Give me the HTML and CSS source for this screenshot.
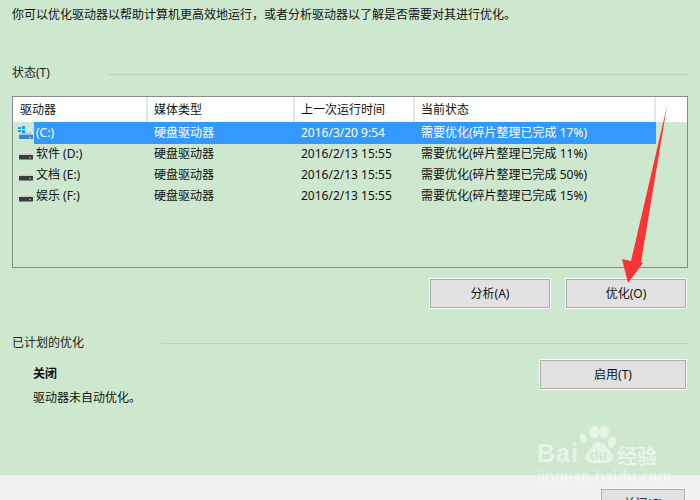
FILE: index.html
```html
<!DOCTYPE html>
<html lang="zh-CN">
<head>
<meta charset="utf-8">
<title>优化驱动器</title>
<link rel="stylesheet" href="styles.css">
</head>
<body>
<svg width="0" height="0" class="defs">
  <defs>
    <g id="drive">
      <path d="M2 10 L4 7 H14 L16 10 Z" fill="#cfcfcf"/>
      <rect x="2" y="7" width="14" height="1" fill="#e6e6e6"/>
      <rect x="2" y="10" width="14" height="4" fill="#3c3c3c"/>
      <rect x="2" y="14" width="14" height="1" fill="#8a8a8a"/>
      <rect x="12" y="12" width="2" height="1" fill="#5fdc5f"/>
    </g>
  </defs>
</svg>
<div class="window">
  <main class="content">
    <p class="intro">你可以优化驱动器以帮助计算机更高效地运行，或者分析驱动器以了解是否需要对其进行优化。</p>
    <div class="heading heading-status"><span>状态(T)</span><i class="rule rule-status"></i></div>
    <section class="list">
      <div class="list-head">
        <span class="h h1">驱动器</span>
        <span class="h h2">媒体类型</span>
        <span class="h h3">上一次运行时间</span>
        <span class="h h4">当前状态</span>
        <span class="h h5"></span>
      </div>
      <div class="row selected">
        <span class="ic">
          <svg width="16" height="16" viewBox="0 0 16 16">
            <rect x="4" y="8" width="10" height="1" fill="#bcdcf0"/>
            <path d="M2 11 L4 9 H14 L16 11 Z" fill="#9ccbe8"/>
            <rect x="2" y="11" width="14" height="4" fill="#3f86bb"/>
            <rect x="12" y="13" width="2" height="1" fill="#bff0d0"/>
            <rect x="1" y="3" width="3" height="2" fill="#1f9cf0"/>
            <rect x="5" y="2" width="3" height="3" fill="#1f9cf0"/>
            <rect x="1" y="6" width="3" height="2" fill="#1f9cf0"/>
            <rect x="5" y="6" width="3" height="3" fill="#1f9cf0"/>
          </svg>
        </span>
        <span class="c name">(C:)</span><span class="c type">硬盘驱动器</span><span class="c time">2016/3/20 9:54</span><span class="c state">需要优化(碎片整理已完成 17%)</span>
      </div>
      <div class="row">
        <span class="ic"><svg width="16" height="16" viewBox="0 0 16 16"><use href="#drive"/></svg></span>
        <span class="c name">软件 (D:)</span><span class="c type">硬盘驱动器</span><span class="c time">2016/2/13 15:55</span><span class="c state">需要优化(碎片整理已完成 11%)</span>
      </div>
      <div class="row">
        <span class="ic"><svg width="16" height="16" viewBox="0 0 16 16"><use href="#drive"/></svg></span>
        <span class="c name">文档 (E:)</span><span class="c type">硬盘驱动器</span><span class="c time">2016/2/13 15:55</span><span class="c state">需要优化(碎片整理已完成 50%)</span>
      </div>
      <div class="row">
        <span class="ic"><svg width="16" height="16" viewBox="0 0 16 16"><use href="#drive"/></svg></span>
        <span class="c name">娱乐 (F:)</span><span class="c type">硬盘驱动器</span><span class="c time">2016/2/13 15:55</span><span class="c state">需要优化(碎片整理已完成 15%)</span>
      </div>
    </section>
    <div class="actions">
      <button class="btn btn-wide">分析(A)</button>
      <button class="btn btn-wide">优化(O)</button>
    </div>
    <div class="heading heading-plan"><span>已计划的优化</span><i class="rule rule-plan"></i></div>
    <div class="plan">
      <div class="plan-text">
        <strong class="plan-title">关闭</strong>
        <p class="plan-desc">驱动器未自动优化。</p>
      </div>
      <button class="btn btn-enable">启用(T)</button>
    </div>
  </main>
  <footer class="footer">
    <button class="btn btn-close">关闭(C)</button>
  </footer>
</div>

<svg class="arrow" width="700" height="500" viewBox="0 0 700 500">
  <polygon points="667,106 641,262 643,263 628,283 622,259 631,261" fill="#fb3337"/>
</svg>

<div class="mark">
  <svg class="paw" width="40" height="42" viewBox="0 0 40 42">
    <g fill="#fff" fill-opacity=".5">
      <ellipse cx="3" cy="14" rx="3.5" ry="5.5" transform="rotate(-15 3 14)"/>
      <ellipse cx="14" cy="8" rx="5" ry="6.5"/>
      <ellipse cx="24" cy="8" rx="5" ry="6.5"/>
      <ellipse cx="32" cy="18" rx="4" ry="6" transform="rotate(15 32 18)"/>
      <path d="M19 18 C25 18 27 24 31 28 C36 33 32 39 26 39 H12 C6 39 3 33 8 28 C12 24 13 18 19 18 Z"/>
    </g>
  </svg>
  <span class="mark-bai">Bai</span>
  <span class="mark-du">du</span>
  <span class="mark-jy">经验</span>
  <span class="mark-url">jingyan.baidu.com</span>
</div>
</body>
</html>
```
FILE: styles.css
```css
* { box-sizing: border-box; }
html, body { margin: 0; height: 100%; }
body {
  width: 700px;
  height: 500px;
  overflow: hidden;
  position: relative;
  font-family: "Noto Sans", "Noto Sans CJK SC", sans-serif;
  font-size: 12px;
  line-height: 16px;
  color: #111;
  background: #f0f0f0;
}
.defs { position: absolute; }
.window { display: flex; flex-direction: column; height: 500px; }
.content {
  height: 475px;
  flex: none;
  padding: 7px 11px 0 12px;
  background: #cde8cf;
}
.intro { margin: 0; }
.heading { display: flex; align-items: center; color: #222; }
.heading-status { margin-top: 42px; }
.heading-plan { margin-top: 27px; }
.rule { display: block; flex: 1; height: 1px; background: #bfd0c0; }
.rule-status { margin: 3px 0 0 58px; }
.rule-plan { margin: 1px 0 0 77px; }
.list {
  margin-top: 15px;
  width: 676px;
  height: 172px;
  border: 1px solid #858b87;
}
.list-head {
  display: grid;
  grid-template-columns: 135px 147px 120px 241px 31px;
  height: 25px;
  background: #fff;
}
.h {
  padding-left: 6px;
  line-height: 26px;
  border-right: 2px solid #e6e6e6;
}
.h1 { padding-left: 7px; }
.h5 { border-right: 0; }
.row {
  display: grid;
  grid-template-columns: 21px 113px 147px 120px 242px;
  width: 643px;
  height: 21px;
  line-height: 22px;
}
.ic { padding: 2px 0 0 4px; display: block; }
.ic svg { display: block; }
.name { padding-left: 2px; }
.type, .time, .state { padding-left: 7px; white-space: nowrap; }
.selected .c { background: #3399ff; color: #fff; }
.actions {
  display: flex;
  justify-content: flex-end;
  gap: 14px;
  margin-top: 11px;
  width: 675px;
}
.btn {
  display: block;
  height: 29px;
  padding: 0;
  font: inherit;
  color: #111;
  background: #e1e1e1;
  border: 1px solid #adadad;
  outline: 1px solid #f6f9f6;
  outline-offset: 0;
}
.btn-wide { width: 120px; margin: 0 1px; }
.plan {
  display: flex;
  justify-content: space-between;
  width: 674px;
  margin-top: 9px;
}
.plan-text { padding: 6px 0 0 21px; }
.plan-title { display: block; font-weight: 700; }
.plan-desc { margin: 8px 0 0; }
.btn-enable { width: 146px; }
.footer {
  flex: 1;
  border-top: 1px solid #e8e8e8;
  padding: 13px 15px 0 0;
  display: flex;
  justify-content: flex-end;
  align-items: flex-start;
}
.btn-close { width: 84px; flex: none; }
.arrow { position: absolute; left: 0; top: 0; pointer-events: none; }
.mark { position: absolute; left: 530px; top: 420px; width: 150px; height: 70px; color: rgba(255,255,255,.55); }
.paw { position: absolute; left: 50px; top: 4px; }
.mark-bai { position: absolute; left: 7px; top: 18px; font: 700 25px/30px "Liberation Sans", sans-serif; letter-spacing: 1px; }
.mark-du { position: absolute; left: 60px; top: 27px; font: 700 14px/16px "Liberation Sans", sans-serif; color: #cde8cf; }
.mark-jy { position: absolute; left: 87px; top: 24px; font: 700 20px/24px "Noto Sans CJK SC", sans-serif; }
.mark-url { position: absolute; left: 7px; top: 46px; font: 400 15px/18px "Noto Sans", sans-serif; letter-spacing: .3px; white-space: nowrap; }
```
